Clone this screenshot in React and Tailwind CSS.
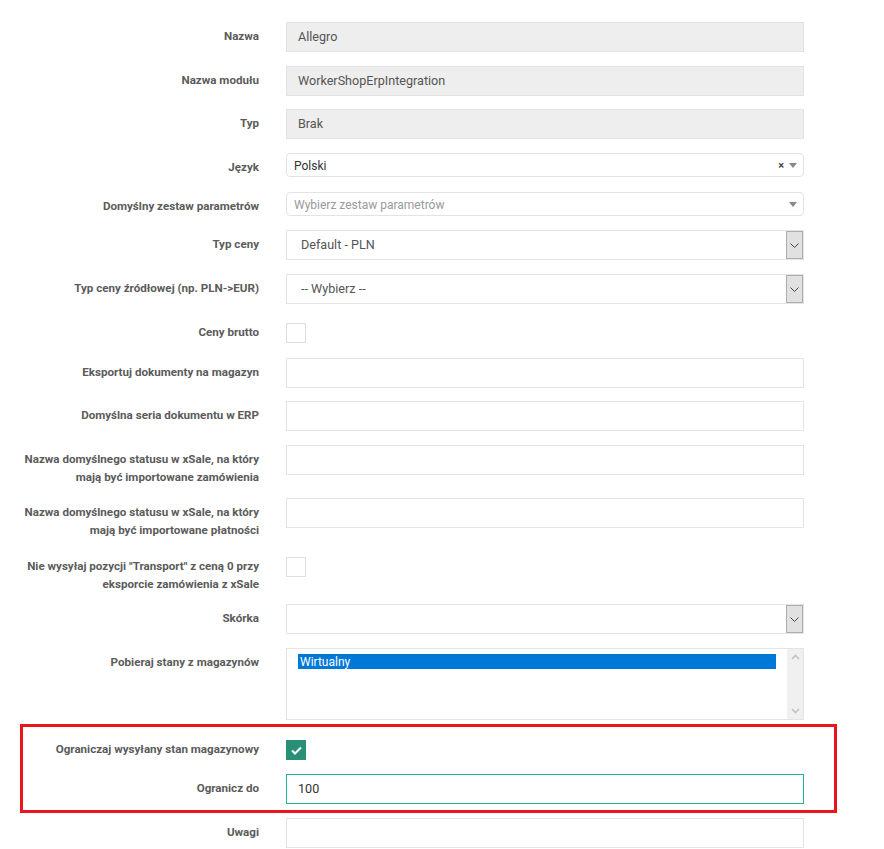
import React from 'react';

const labelCls =
  'shrink-0 pt-[5px] text-right text-[11.6px] leading-[18px] font-bold text-[#5b5b5b]';

const Row = ({ label, children, className = '', labelWidth = 'w-[259px]' }) => (
  <div className={`flex ${className}`}>
    <div className={`${labelWidth} ${labelCls}`}>{label}</div>
    <div className="ml-[27px] w-[518px] shrink-0">{children}</div>
  </div>
);

const ReadonlyInput = ({ value }) => (
  <div className="h-[30px] flex items-center pt-[1px] px-[11px] bg-[#eeeeee] border border-[#e2e2e2] text-[12.6px] text-[#555]">
    {value}
  </div>
);

const TextInput = ({ value = '', focused = false }) => (
  <div
    className={`h-[30px] flex items-center pt-[1px] px-[11px] bg-white border text-[12.6px] text-[#333] ${
      focused ? 'border-[#22b294]' : 'border-[#e4e4e4]'
    }`}
  >
    {value}
  </div>
);

const Caret = () => (
  <svg width="8" height="5" viewBox="0 0 8 5" className="fill-[#888]">
    <path d="M0 0h8L4 5z" />
  </svg>
);

const Select2 = ({ value, placeholder, clearable }) => (
  <div className="h-[24px] flex items-center pl-[7px] pr-[6px] bg-white border border-[#e3e3e3] rounded-[4px] text-[12px]">
    <span className={`flex-1 pt-[2px] ${value ? 'text-[#333]' : 'text-[#999]'}`}>{value || placeholder}</span>
    {clearable && <span className="mr-[5px] pt-[1px] text-[11px] font-bold leading-none text-[#444]">×</span>}
    <Caret />
  </div>
);

const NativeSelect = ({ value = '' }) => (
  <div className="h-[30px] flex items-stretch bg-white border border-[#e4e4e4] text-[12.6px] text-[#555]">
    <span className="flex-1 flex items-center pt-[1px] pl-[14px]">{value}</span>
    <span className="w-[17px] flex items-center justify-center bg-[#e1e1e1] border border-[#adadad]">
      <svg width="9" height="5" viewBox="0 0 9 5" fill="none" stroke="#444" strokeWidth="1">
        <path d="M0.5 0.5l4 4 4-4" />
      </svg>
    </span>
  </div>
);

const Checkbox = ({ checked }) =>
  checked ? (
    <div className="mt-[5px] w-[20px] h-[20px] flex items-center justify-center bg-[#2a8f77] border border-[#2a8f77]">
      <svg width="11" height="9" viewBox="0 0 11 9" fill="none" stroke="#fff" strokeWidth="2">
        <path d="M1 4.5l3 3 6-6" />
      </svg>
    </div>
  ) : (
    <div className="mt-[5px] w-[20px] h-[20px] bg-white border border-[#dddddd]" />
  );

const Listbox = () => (
  <div className="h-[72px] flex bg-white border border-[#e4e4e4]">
    <div className="flex-1 pl-[11px] pr-[11px] pt-[5px]">
      <div className="h-[15px] flex items-center pl-[2px] bg-[#0078d7] text-[12px] text-white">Wirtualny</div>
    </div>
    <div className="w-[16px] bg-[#f0f0f0] flex flex-col items-center justify-between py-[5px]">
      <svg width="9" height="6" viewBox="0 0 9 6" fill="none" stroke="#c2c2c2" strokeWidth="1.6">
        <path d="M1 5l3.5-3.5L8 5" />
      </svg>
      <svg width="9" height="6" viewBox="0 0 9 6" fill="none" stroke="#c2c2c2" strokeWidth="1.6">
        <path d="M1 1l3.5 3.5L8 1" />
      </svg>
    </div>
  </div>
);

export default function App() {
  return (
    <div className="w-[884px] h-[849px] overflow-hidden bg-white font-['Roboto',sans-serif]">
      <Row label="Nazwa" className="mt-[22px]">
        <ReadonlyInput value="Allegro" />
      </Row>
      <Row label="Nazwa modułu" className="mt-[14px]">
        <ReadonlyInput value="WorkerShopErpIntegration" />
      </Row>
      <Row label="Typ" className="mt-[13px]">
        <ReadonlyInput value="Brak" />
      </Row>
      <Row label="Język" className="mt-[14px]">
        <Select2 value="Polski" clearable />
      </Row>
      <Row label="Domyślny zestaw parametrów" className="mt-[15px]">
        <Select2 placeholder="Wybierz zestaw parametrów" />
      </Row>
      <Row label="Typ ceny" className="mt-[14px]">
        <NativeSelect value="Default - PLN" />
      </Row>
      <Row label="Typ ceny źródłowej (np. PLN->EUR)" className="mt-[14px]">
        <NativeSelect value="-- Wybierz --" />
      </Row>
      <Row label="Ceny brutto" className="mt-[14px]">
        <Checkbox />
      </Row>
      <Row label="Eksportuj dokumenty na magazyn" className="mt-[15px]">
        <TextInput />
      </Row>
      <Row label="Domyślna seria dokumentu w ERP" className="mt-[13px]">
        <TextInput />
      </Row>
      <Row
        label={<>Nazwa domyślnego statusu w xSale, na który<br />mają być importowane zamówienia</>}
        className="mt-[14px]"
      >
        <TextInput />
      </Row>
      <Row
        label={<>Nazwa domyślnego statusu w xSale, na który<br />mają być importowane płatności</>}
        className="mt-[12px]"
      >
        <TextInput />
      </Row>
      <Row
        label={<>Nie wysyłaj pozycji "Transport" z ceną 0 przy<br />eksporcie zamówienia z xSale</>}
        className="mt-[13px]"
      >
        <Checkbox />
      </Row>
      <Row label="Skórka" className="mt-[11px]">
        <NativeSelect />
      </Row>
      <Row label="Pobieraj stany z magazynów" className="mt-[14px]">
        <Listbox />
      </Row>

      {/* wyróżnione pola */}
      <div className="mt-[4px] ml-[20px] w-[817px] border-[3px] border-[#e8141e] pt-[8px] pb-[6px]">
        <Row label="Ograniczaj wysyłany stan magazynowy" labelWidth="w-[236px]">
          <Checkbox checked />
        </Row>
        <Row label="Ogranicz do" labelWidth="w-[236px]" className="mt-[14px]">
          <TextInput value="100" focused />
        </Row>
      </div>

      <Row label="Uwagi" className="mt-[5px]">
        <TextInput />
      </Row>
    </div>
  );
}
